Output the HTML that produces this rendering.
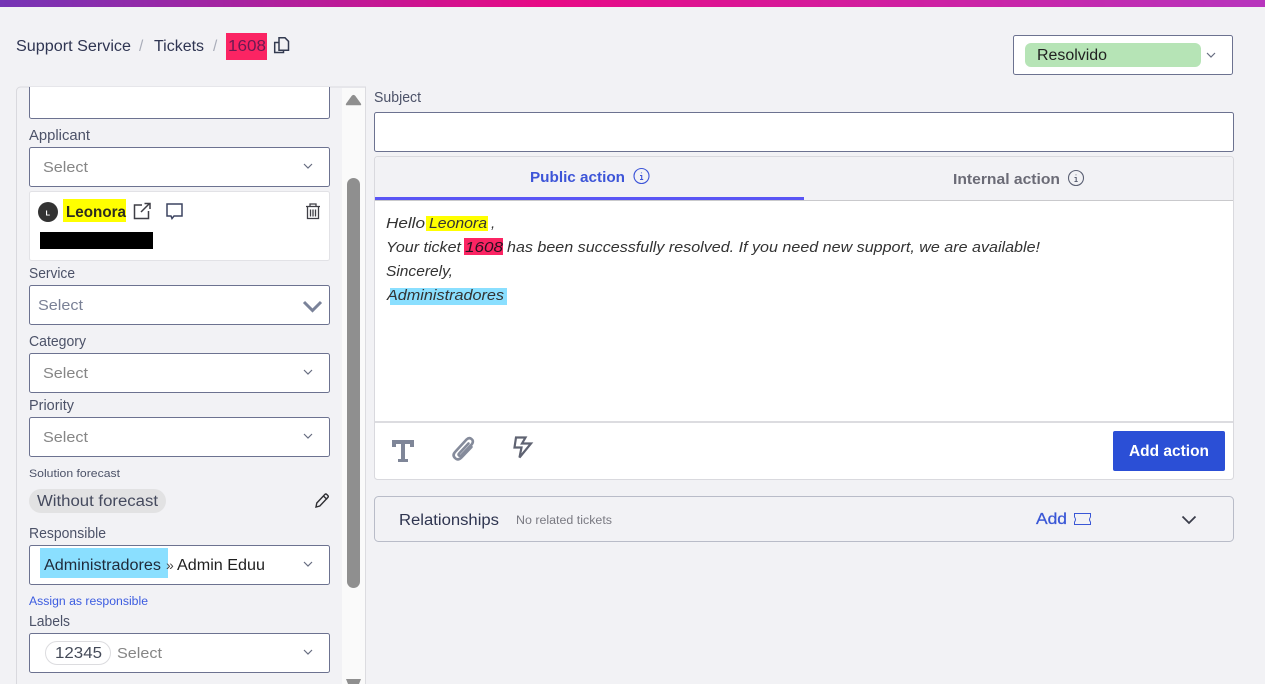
<!DOCTYPE html>
<html lang="en"><head><meta charset="utf-8"><title>Ticket 1608</title>
<style>
html,body{margin:0;padding:0;background:#f2f2f5;width:1265px;height:684px;overflow:hidden}
svg{display:block}
text{font-family:"Liberation Sans",sans-serif;font-size:14.5px;fill:#4c5268}
.sel{fill:#868686;font-size:15px}
.box{fill:#fff;stroke:#6c7290;stroke-width:1}
.chev{fill:none;stroke:#666c80;stroke-width:1.2}
.it{font-style:italic;fill:#333;font-size:15px}
.b{font-weight:bold}
</style></head><body>
<svg width="1265" height="684" viewBox="0 0 1265 684" xmlns="http://www.w3.org/2000/svg">
<defs><linearGradient id="g" x1="0" x2="1" y1="0" y2="0"><stop offset="0" stop-color="#7535b5"/><stop offset=".43" stop-color="#e80a85"/><stop offset="1" stop-color="#b735bd"/></linearGradient></defs>
<rect width="1265" height="684" fill="#f2f2f5"/>
<rect width="1265" height="7" fill="url(#g)"/>

<!-- breadcrumb -->
<text x="16" y="51" style="font-size:15.5px;fill:#2f3552" textLength="115" lengthAdjust="spacingAndGlyphs">Support Service</text>
<text x="139" y="51" style="font-size:15.5px;fill:#a9adb9">/</text>
<text x="154" y="51" style="font-size:15.5px;fill:#2f3552" textLength="50" lengthAdjust="spacingAndGlyphs">Tickets</text>
<text x="213" y="51" style="font-size:15.5px;fill:#a9adb9">/</text>
<rect x="226" y="33" width="41" height="27" fill="#fb2463"/>
<text x="228" y="51" style="font-size:15.5px;fill:#6a1a52" textLength="38" lengthAdjust="spacingAndGlyphs">1608</text>
<path d="M279 42.500h-4.300v10h8.800v-2" fill="none" stroke="#333a50" stroke-width="1.500"/>
<path d="M279 37.800h6l3.500 3.500v9h-9.500z" fill="none" stroke="#333a50" stroke-width="1.500"/>

<!-- status -->
<rect class="box" x="1013.500" y="35.500" width="219" height="39" rx="2"/>
<rect x="1025" y="43" width="176" height="24" rx="6" fill="#b6e4b6"/>
<text x="1037" y="60" style="font-size:15.5px;fill:#222" textLength="70" lengthAdjust="spacingAndGlyphs">Resolvido</text>
<path class="chev" d="M1207 53l4 4 4-4"/>

<!-- left panel -->
<path d="M16.500 684V91a4 4 0 0 1 4-4H366" fill="none" stroke="#d9d9de"/>
<rect x="342" y="88" width="23" height="596" fill="#fafafa"/>
<path d="M365.500 87v597" stroke="#dcdce0"/>
<path d="M346.500 105q-.8 0 0-1.500l5.500-7.500q1.500-1.500 3 0l5.500 7.500q.8 1.500 0 1.500z" fill="#8f8f8f" stroke="#8f8f8f" stroke-width=".6"/>
<rect x="347" y="178" width="13" height="410" rx="6.500" fill="#8f8f8f"/>
<path d="M346 679h15l-2 5h-11z" fill="#8f8f8f"/>

<path class="box" d="M29.500 87v29.500a2 2 0 0 0 2 2h296a2 2 0 0 0 2-2V87"/>
<text x="29" y="140" textLength="61" lengthAdjust="spacingAndGlyphs">Applicant</text>
<rect class="box" x="29.500" y="147.500" width="300" height="39" rx="2"/>
<text class="sel" x="43" y="172" textLength="45" lengthAdjust="spacingAndGlyphs">Select</text>
<path class="chev" d="M304 164l4 4 4-4"/>

<rect x="29.500" y="191.500" width="300" height="69" rx="2" fill="#fff" stroke="#e2e2e6"/>
<circle cx="48" cy="212" r="10" fill="#333"/>
<text x="45.500" y="215.500" style="font-size:7.5px;fill:#fff" class="b">L</text>
<rect x="63" y="199" width="63" height="23" fill="#ffff00"/>
<text x="66" y="217" class="b" style="font-size:15.5px;fill:#2c2c20" textLength="60" lengthAdjust="spacingAndGlyphs">Leonora</text>
<path d="M142 205h-7.500v13.500h14V211" fill="none" stroke="#3f3f46" stroke-width="1.500"/>
<path d="M141 212l8.500-8.500M144.500 203.500h5.500v5.500" fill="none" stroke="#3f3f46" stroke-width="1.500"/>
<path d="M167 204h15v12h-8l-2 2.500-1-2.500h-4z" fill="none" stroke="#3c4460" stroke-width="1.500"/>
<path d="M306 206.500h14M310 206.500v-2.500h6v2.500M307.500 207v11.500h11V207M310.500 209.500v7M313 209.500v7M315.500 209.500v7" fill="none" stroke="#3f3f46" stroke-width="1.300"/>
<rect x="40" y="232" width="113" height="17" fill="#000"/>

<text x="29" y="278" textLength="46" lengthAdjust="spacingAndGlyphs">Service</text>
<rect class="box" x="29.500" y="285.500" width="300" height="39" rx="2"/>
<text class="sel" x="38" y="310" style="fill:#7a8196" textLength="45" lengthAdjust="spacingAndGlyphs">Select</text>
<path d="M304 302l8.500 8.500 8.500-8.500" fill="none" stroke="#7a8299" stroke-width="3"/>

<text x="29" y="346" textLength="57" lengthAdjust="spacingAndGlyphs">Category</text>
<rect class="box" x="29.500" y="353.500" width="300" height="39" rx="2"/>
<text class="sel" x="43" y="378" textLength="45" lengthAdjust="spacingAndGlyphs">Select</text>
<path class="chev" d="M304 370l4 4 4-4"/>

<text x="29" y="410" textLength="45" lengthAdjust="spacingAndGlyphs">Priority</text>
<rect class="box" x="29.500" y="417.500" width="300" height="39" rx="2"/>
<text class="sel" x="43" y="442" textLength="45" lengthAdjust="spacingAndGlyphs">Select</text>
<path class="chev" d="M304 434l4 4 4-4"/>

<text x="29" y="477" style="font-size:11px" textLength="91" lengthAdjust="spacingAndGlyphs">Solution forecast</text>
<rect x="29" y="489" width="137" height="24" rx="12" fill="#e2e2e3"/>
<text x="37" y="506" style="font-size:15.5px;fill:#454a5e" textLength="121" lengthAdjust="spacingAndGlyphs">Without forecast</text>
<path d="M316 507l.8-4 8-8.500q1-1 2 0l1 1q1 1 0 2l-8 8.500z M323.500 496l3.500 3.500" fill="none" stroke="#2f2f33" stroke-width="1.400"/>

<text x="29" y="538" textLength="77" lengthAdjust="spacingAndGlyphs">Responsible</text>
<rect class="box" x="29.500" y="545.500" width="300" height="39" rx="2"/>
<rect x="40" y="548" width="128" height="30" fill="#8adfff"/>
<text x="44" y="570" style="font-size:15.5px;fill:#1f2a3a" textLength="117" lengthAdjust="spacingAndGlyphs">Administradores</text>
<text x="166" y="570" style="font-size:14px;fill:#444">»</text>
<text x="177" y="570" style="font-size:15.5px;fill:#1f1f1f" textLength="88" lengthAdjust="spacingAndGlyphs">Admin Eduu</text>
<path class="chev" d="M304 562l4 4 4-4"/>

<text x="29" y="605" style="font-size:11.5px;fill:#3c5ce0" textLength="119" lengthAdjust="spacingAndGlyphs">Assign as responsible</text>
<text x="29" y="626" textLength="41" lengthAdjust="spacingAndGlyphs">Labels</text>
<rect class="box" x="29.500" y="633.500" width="300" height="39" rx="2"/>
<rect x="45.500" y="641.500" width="65" height="23" rx="11.500" fill="#fff" stroke="#dcdcdf"/>
<text x="55" y="658" style="font-size:15.5px;fill:#444a58" textLength="47" lengthAdjust="spacingAndGlyphs">12345</text>
<text class="sel" x="117" y="658" textLength="45" lengthAdjust="spacingAndGlyphs">Select</text>
<path class="chev" d="M304 650l4 4 4-4"/>

<!-- subject -->
<text x="374" y="102" textLength="47" lengthAdjust="spacingAndGlyphs">Subject</text>
<rect class="box" x="374.500" y="112.500" width="859" height="39" rx="2"/>

<!-- action card -->
<rect x="374.500" y="156.500" width="859" height="323" rx="3" fill="#fff" stroke="#d9d9de"/>
<path d="M375 200v-40a3 3 0 0 1 3-3h852a3 3 0 0 1 3 3v40z" fill="#f2f2f5"/>
<rect x="375" y="200" width="858" height="1" fill="#c9c9cc"/>
<rect x="375" y="197" width="429" height="3" fill="#5a55f5"/>
<text x="530" y="182" class="b" style="font-size:15px;fill:#3d55d8" textLength="95" lengthAdjust="spacingAndGlyphs">Public action</text>
<circle cx="641.500" cy="176" r="7.500" fill="none" stroke="#3d55d8" stroke-width="1.100"/>
<path d="M641.500 172.500v.8M640 175.500h1.700v4M640 179.500h3.200" fill="none" stroke="#3d55d8" stroke-width="1.100"/>
<text x="953" y="184" class="b" style="font-size:15px;fill:#6b6b76" textLength="107" lengthAdjust="spacingAndGlyphs">Internal action</text>
<circle cx="1076" cy="178" r="7.500" fill="none" stroke="#5d6275" stroke-width="1.100"/>
<path d="M1076 174.500v.8M1074.500 177.500h1.700v4M1074.500 181.500h3.200" fill="none" stroke="#5d6275" stroke-width="1.100"/>

<text class="it" x="386" y="228" textLength="39" lengthAdjust="spacingAndGlyphs">Hello</text>
<rect x="426" y="216" width="62" height="15" fill="#ffff00"/>
<text class="it" x="429" y="228" textLength="58" lengthAdjust="spacingAndGlyphs">Leonora</text>
<text class="it" x="491" y="228">,</text>
<text class="it" x="386" y="252" textLength="75" lengthAdjust="spacingAndGlyphs">Your ticket</text>
<rect x="464" y="238" width="39" height="17" fill="#fb2463"/>
<text class="it" x="465" y="252" style="fill:#2a1020" textLength="38" lengthAdjust="spacingAndGlyphs">1608</text>
<text class="it" x="507" y="252" textLength="533" lengthAdjust="spacingAndGlyphs">has been successfully resolved. If you need new support, we are available!</text>
<text class="it" x="386" y="276" textLength="67" lengthAdjust="spacingAndGlyphs">Sincerely,</text>
<rect x="390" y="288" width="117" height="17" fill="#8adfff"/>
<text class="it" x="387" y="300" textLength="117" lengthAdjust="spacingAndGlyphs">Administradores</text>

<rect x="375" y="421" width="858" height="2" fill="#dcdce0"/>
<!-- toolbar icons -->
<path d="M394 447v-5h18v5M403 442v18" fill="none" stroke="#7f8698" stroke-width="4"/>
<path d="M398 460.500h10" fill="none" stroke="#7f8698" stroke-width="3"/>
<path d="M471.500 447l-10 10.500q-3.500 3.500-6.500.5t.5-6.500l11-12q2.500-2.500 5-.5t.5 5l-10.500 11q-1.500 1.500-2.500.5t.5-2.500l9-9.500" fill="none" stroke="#858b9b" stroke-width="2.600" stroke-linecap="round"/>
<path d="M516 437.500h9.500l-3.500 6h9l-11.500 14 2-10h-7z" fill="none" stroke="#5f6372" stroke-width="2.200"/>
<rect x="1113" y="431" width="112" height="40" rx="2" fill="#2b4fd6"/>
<text x="1129" y="456" class="b" style="font-size:15.5px;fill:#fff" textLength="80" lengthAdjust="spacingAndGlyphs">Add action</text>

<!-- relationships -->
<rect x="374.500" y="496.500" width="859" height="45" rx="4" fill="#f2f2f5" stroke="#b9bcc8"/>
<text x="399" y="525" style="font-size:15.5px;fill:#2f3550" textLength="100" lengthAdjust="spacingAndGlyphs">Relationships</text>
<text x="516" y="524" style="font-size:11.5px;fill:#7a7a82" textLength="96" lengthAdjust="spacingAndGlyphs">No related tickets</text>
<text x="1036" y="524" style="font-size:15.5px;fill:#3a57d6;stroke:#3a57d6;stroke-width:.25" textLength="31" lengthAdjust="spacingAndGlyphs">Add</text>
<path d="M1074.500 513.500h16v3.500q-2 2.500 0 5v2.500h-16V522q2-2.500 0-5z" fill="none" stroke="#3a57d6" stroke-width="1"/>
<path d="M1182.500 516.500l6.500 6.500 6.500-6.500" fill="none" stroke="#3a3d4a" stroke-width="1.800"/>
</svg>
</body></html>
